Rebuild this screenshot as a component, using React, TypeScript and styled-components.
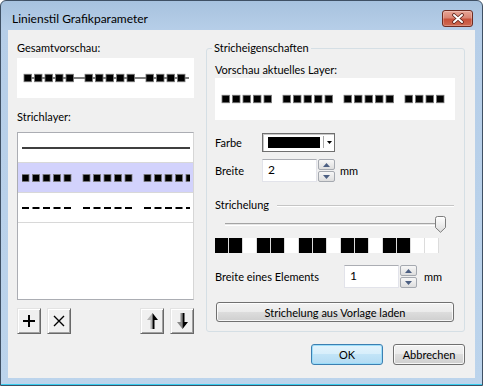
import * as React from "react";
import styled, { createGlobalStyle } from "styled-components";

const GlobalStyle = createGlobalStyle`
  html, body { margin: 0; padding: 0; background: #fff; }
  body {
    width: 483px;
    height: 386px;
    overflow: hidden;
    font-family: Lato, "Liberation Sans", sans-serif;
    font-size: 11px;
    color: #000;
  }
  * { box-sizing: border-box; }
`;

const DASH_CELLS = [1, 1, 0, 1, 1, 0, 1, 1, 0, 1, 1, 0, 1, 1, 0, 0];

// groups of five marks, 10.5px apart, a new group every 61px
const DashLine = ({ width, height, size, markHeight, offset, end, line }: DashProps) => {
  const xs: number[] = [];
  for (let g = 0; offset + g * 61 < width; g++) {
    for (let k = 0; k < 5; k++) {
      const x = offset + g * 61 + k * 10.5;
      if (x < width && (end === undefined || x + size <= end)) xs.push(x);
    }
  }
  const mh = markHeight ?? size;
  const cy = height / 2;
  return (
    <svg width={width} height={height}>
      {line && (
        <rect x={offset} y={cy - 0.5} width={(end ?? width) - offset} height={1} fill="#000" />
      )}
      {xs.map((x) => (
        <rect
          key={x}
          x={x}
          y={cy - mh / 2}
          width={size}
          height={mh}
          fill="#000"
          stroke={markHeight ? "none" : "#7a7a7a"}
          strokeWidth={0.8}
        />
      ))}
    </svg>
  );
};

type DashProps = {
  width: number;
  height: number;
  size: number;
  markHeight?: number;
  offset: number;
  end?: number;
  line?: boolean;
};

const App = () => {
  return (
    <>
      <GlobalStyle />
      <Window>
        <TitleBar>
          <Title>Linienstil Grafikparameter</Title>
          <CloseButton>
            <svg width="14" height="11" viewBox="0 0 14 11">
              <path d="M3 2 L11 9 M11 2 L3 9" stroke="#5b2118" strokeWidth="3.6" strokeLinecap="round" />
              <path d="M3 2 L11 9 M11 2 L3 9" stroke="#fff" strokeWidth="2" strokeLinecap="round" />
            </svg>
          </CloseButton>
        </TitleBar>

        <Client>
          <LeftColumn>
            <Label>Gesamtvorschau:</Label>
            <PreviewBox $h={40} $mt={2}>
              <DashLine width={177} height={40} size={7.5} offset={7} end={172} line />
            </PreviewBox>

            <Label $mt={11}>Strichlayer:</Label>
            <LayerList>
              <LayerRow>
                <svg width="168" height="4">
                  <rect x="0" y="1.25" width="168" height="1.5" fill="#000" />
                </svg>
              </LayerRow>
              <LayerRow $selected>
                <DashLine width={168} height={10} size={7} offset={0} />
              </LayerRow>
              <LayerRow>
                <DashLine width={168} height={4} size={7} markHeight={2} offset={0} />
              </LayerRow>
            </LayerList>

            <ToolRow>
              <ToolGroup>
                <ToolButton>
                  <svg width="12" height="12">
                    <path d="M6 0 V12 M0 6 H12" stroke="#000" strokeWidth="2" />
                  </svg>
                </ToolButton>
                <ToolButton>
                  <svg width="12" height="12">
                    <path d="M1 1 L11 11 M11 1 L1 11" stroke="#000" strokeWidth="1.4" />
                  </svg>
                </ToolButton>
              </ToolGroup>
              <ToolGroup>
                <ToolButton>
                  <svg width="11" height="16">
                    <polygon points="5.5,0 0,7 3.5,7 3.5,16 5.5,16" fill="#b4b4b4" />
                    <polygon points="5.5,0 11,7 7.5,7 7.5,16 5.5,16" fill="#000" />
                  </svg>
                </ToolButton>
                <ToolButton>
                  <svg width="11" height="16">
                    <polygon points="5.5,16 0,9 3.5,9 3.5,0 5.5,0" fill="#8a8a8a" />
                    <polygon points="5.5,16 11,9 7.5,9 7.5,0 5.5,0" fill="#000" />
                  </svg>
                </ToolButton>
              </ToolGroup>
            </ToolRow>
          </LeftColumn>

          <RightColumn>
            <Group>
              <Legend>Stricheigenschaften</Legend>
              <Label $mt={6}>Vorschau aktuelles Layer:</Label>
              <PreviewBox $h={42}>
                <DashLine width={240} height={42} size={7.5} offset={7} end={231} />
              </PreviewBox>

              <FieldRow $mt={13}>
                <FieldLabel $w={47}>Farbe</FieldLabel>
                <ColorCombo>
                  <Swatch />
                  <ComboSep />
                  <svg width="5" height="3" style={{ marginLeft: 3 }}>
                    <polygon points="0,0 5,0 2.5,3" fill="#000" />
                  </svg>
                </ColorCombo>
              </FieldRow>

              <FieldRow $mt={7}>
                <FieldLabel $w={47}>Breite</FieldLabel>
                <SpinField value="2" $w={55} />
                <Spinner />
                <Unit $ml={5}>mm</Unit>
              </FieldRow>

              <SectionHeader>
                Strichelung
                <Rule />
              </SectionHeader>

              <Slider>
                <Track />
                <svg width="11" height="17">
                  <defs>
                    <linearGradient id="thumbFill" x1="0" y1="0" x2="0" y2="1">
                      <stop offset="0" stopColor="#ffffff" />
                      <stop offset="1" stopColor="#dcdcdc" />
                    </linearGradient>
                  </defs>
                  <path
                    d="M0.5 2.5 Q0.5 0.5 2.5 0.5 H8.5 Q10.5 0.5 10.5 2.5 V11.5 L5.5 16.3 L0.5 11.5 Z"
                    fill="url(#thumbFill)"
                    stroke="#7d7d7d"
                  />
                </svg>
              </Slider>

              <CellStrip>
                {DASH_CELLS.map((on, i) => (
                  <Cell key={i} $on={!!on} />
                ))}
              </CellStrip>

              <FieldRow $mt={12}>
                <FieldLabel $w={129}>Breite eines Elements</FieldLabel>
                <SpinField value="1" $w={55} />
                <Spinner />
                <Unit $ml={7}>mm</Unit>
              </FieldRow>

              <WideButton>Strichelung aus Vorlage laden</WideButton>
            </Group>

            <DialogButtons>
              <PushButton $default>OK</PushButton>
              <PushButton>Abbrechen</PushButton>
            </DialogButtons>
          </RightColumn>
        </Client>
      </Window>
    </>
  );
};

const Spinner = () => (
  <SpinBox>
    <SpinButton>
      <svg width="7" height="4">
        <polygon points="0,4 7,4 3.5,0" fill="#4c5f82" />
      </svg>
    </SpinButton>
    <SpinButton>
      <svg width="7" height="4">
        <polygon points="0,0 7,0 3.5,4" fill="#4c5f82" />
      </svg>
    </SpinButton>
  </SpinBox>
);

const SpinField = ({ value, $w }: { value: string; $w: number }) => (
  <TextBox $w={$w}>{value}</TextBox>
);

const Window = styled.div`
  width: 483px;
  height: 386px;
  border: 1px solid #3f5064;
  border-radius: 6px 6px 0 0;
  background: linear-gradient(#a7c2de 0px, #b6cee8 28px, #bcd4ec 100%);
  box-shadow: inset 0 -1px 0 #37cdef;
  padding: 0 7px 7px;
  display: flex;
  flex-direction: column;
`;

const TitleBar = styled.div`
  height: 29px;
  display: flex;
  align-items: flex-start;
  justify-content: space-between;
  padding: 9px 2px 0 4px;
`;

const Title = styled.span`
  margin-top: 1px;
  font-size: 12px;
  line-height: 16px;
  color: #000;
`;

const CloseButton = styled.div`
  width: 31px;
  height: 17px;
  border: 1px solid #6e2c22;
  border-radius: 3px;
  background: linear-gradient(#e8a596 0%, #d98574 45%, #c8513a 55%, #cf6a52 100%);
  box-shadow: inset 0 0 0 1px rgba(255, 255, 255, 0.25);
  display: flex;
  align-items: center;
  justify-content: center;
`;

const Client = styled.div`
  flex: 1;
  background: #f0f0f0;
  display: flex;
  gap: 12px;
  padding: 10px 10px 0 9px;
`;

const LeftColumn = styled.div`
  width: 177px;
  display: flex;
  flex-direction: column;
`;

const RightColumn = styled.div`
  width: 259px;
  display: flex;
  flex-direction: column;
`;

const Label = styled.div<{ $mt?: number }>`
  line-height: 16px;
  margin-top: ${({ $mt }) => $mt ?? 0}px;
`;

const PreviewBox = styled.div<{ $h: number; $mt?: number }>`
  height: ${({ $h }) => $h}px;
  margin-top: ${({ $mt }) => $mt ?? 0}px;
  background: #fff;
  display: flex;
  align-items: center;
`;

const LayerList = styled.div`
  margin-top: 7px;
  height: 168px;
  background: #fff;
  border: 1px solid #abadb3;
  border-right-color: #d6d6d6;
  display: flex;
  flex-direction: column;
`;

const LayerRow = styled.div<{ $selected?: boolean }>`
  height: 30px;
  flex: none;
  padding-left: 4px;
  display: flex;
  align-items: center;
  background: ${({ $selected }) => ($selected ? "#d2d2fc" : "#fff")};
  border-bottom: 1px solid #d8d8d8;
`;

const ToolRow = styled.div`
  margin-top: 8px;
  display: flex;
  justify-content: space-between;
`;

const ToolGroup = styled.div`
  display: flex;
  gap: 6px;
`;

const ToolButton = styled.button`
  width: 24px;
  height: 26px;
  padding: 0;
  background: #f0f0f0;
  border: 1px solid;
  border-color: #e3e3e3 #696969 #696969 #e3e3e3;
  box-shadow: inset 1px 1px 0 #fff, inset -1px -1px 0 #a0a0a0;
  display: flex;
  align-items: center;
  justify-content: center;
`;

const Group = styled.fieldset`
  margin: 0;
  min-width: 0;
  padding: 0 9px 9px 8px;
  border: 1px solid #d5dfe5;
  border-radius: 3px;
  display: flex;
  flex-direction: column;
`;

const Legend = styled.legend`
  margin-left: -3px;
  padding: 0 2px;
  line-height: 16px;
`;

const FieldRow = styled.div<{ $mt: number }>`
  margin-top: ${({ $mt }) => $mt}px;
  display: flex;
  align-items: center;
`;

const FieldLabel = styled.span<{ $w: number }>`
  width: ${({ $w }) => $w}px;
  line-height: 16px;
`;

const ColorCombo = styled.div`
  width: 73px;
  height: 19px;
  background: #fff;
  border: 1px solid #6f6f6f;
  box-shadow: inset 1px 1px 0 #c8c8c8;
  padding: 2px 2px 3px 5px;
  display: flex;
  align-items: center;
`;

const Swatch = styled.div`
  width: 52px;
  height: 11px;
  background: #000;
`;

const ComboSep = styled.div`
  width: 1px;
  height: 12px;
  margin-left: 3px;
  background: #a9a9a9;
`;

const TextBox = styled.div<{ $w: number }>`
  width: ${({ $w }) => $w}px;
  height: 23px;
  background: #fff;
  border: 1px solid #e2e3ea;
  border-top-color: #abadb3;
  padding: 2px 5px;
  line-height: 16px;
  font-size: 12px;
`;

const SpinBox = styled.div`
  margin-left: 1px;
  display: flex;
  flex-direction: column;
  gap: 1px;
`;

const SpinButton = styled.div`
  width: 17px;
  height: 11px;
  border: 1px solid #a5a9b0;
  border-radius: 2px;
  background: linear-gradient(#f7f7f7, #dedede);
  display: flex;
  align-items: center;
  justify-content: center;
`;

const Unit = styled.span<{ $ml: number }>`
  margin-left: ${({ $ml }) => $ml}px;
`;

const SectionHeader = styled.div`
  margin-top: 15px;
  line-height: 16px;
  display: flex;
  align-items: center;
`;

const Rule = styled.div`
  flex: 1;
  height: 2px;
  margin: 1px 1px 0 8px;
  border-top: 1px solid #c5c5c5;
  border-bottom: 1px solid #fff;
`;

const Slider = styled.div`
  margin-top: 3px;
  height: 17px;
  padding: 0 9px 0 10px;
  display: flex;
  align-items: center;
`;

const Track = styled.div`
  flex: 1;
  height: 3px;
  margin-right: -1px;
  background: #e6e6e6;
  border-top: 1px solid #a4a4a4;
  border-bottom: 1px solid #fff;
`;

const CellStrip = styled.div`
  margin-top: 5px;
  height: 15px;
  display: flex;
`;

const Cell = styled.div<{ $on: boolean }>`
  width: 14px;
  height: 15px;
  background: ${({ $on }) => ($on ? "#000" : "#fff")};
  border-right: 1px solid #dcdcdc;
`;

const PushButton = styled.button<{ $default?: boolean }>`
  width: 72px;
  height: 21px;
  padding: 0;
  font: inherit;
  color: #000;
  border: 1px solid ${({ $default }) => ($default ? "#3c7fb1" : "#707070")};
  border-radius: 3px;
  background: ${({ $default }) =>
    $default
      ? "linear-gradient(#e3f3fc 0%, #d6eefb 50%, #c2e4f7 50%, #b3dbf3 100%)"
      : "linear-gradient(#f2f2f2 0%, #ebebeb 50%, #dddddd 50%, #cfcfcf 100%)"};
  box-shadow: inset 0 0 0 1px
    ${({ $default }) => ($default ? "rgba(150, 220, 250, 0.9)" : "rgba(255, 255, 255, 0.8)")};
`;

const WideButton = styled(PushButton)`
  width: auto;
  height: 20px;
  margin: 14px 1px 0 1px;
`;

const DialogButtons = styled.div`
  margin-top: 12px;
  display: flex;
  justify-content: flex-end;
  gap: 10px;
`;

export default App;
